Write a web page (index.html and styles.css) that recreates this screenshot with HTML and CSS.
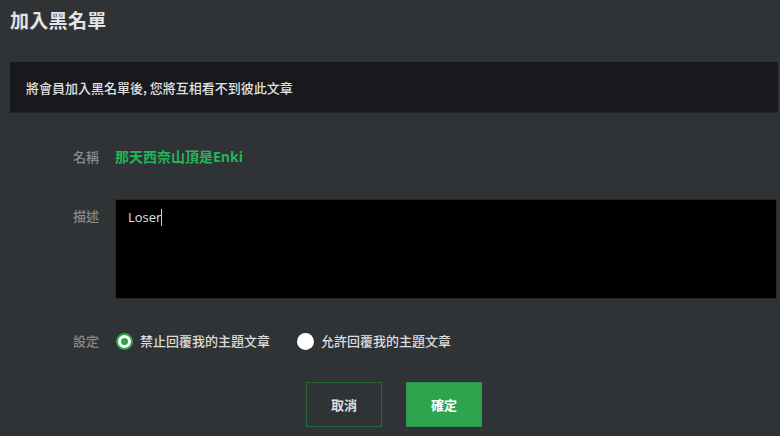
FILE: index.html
```html
<!DOCTYPE html>
<html lang="zh-Hant">
<head>
<meta charset="utf-8">
<title>加入黑名單</title>
<link rel="stylesheet" href="styles.css">
</head>
<body>
<main class="page">
  <h1 class="title">加入黑名單</h1>
  <div class="notice">將會員加入黑名單後, 您將互相看不到彼此文章</div>
  <div class="form">
    <div class="row row-name">
      <span class="label">名稱</span>
      <span class="name">那天西奈山頂是Enki</span>
    </div>
    <div class="row row-desc">
      <span class="label label-top">描述</span>
      <div class="textarea">Loser<span class="caret"></span></div>
    </div>
    <div class="row row-setting">
      <span class="label">設定</span>
      <div class="radios">
        <label class="radio"><span class="dot checked"></span>禁止回覆我的主題文章</label>
        <label class="radio"><span class="dot"></span>允許回覆我的主題文章</label>
      </div>
    </div>
  </div>
  <div class="actions">
    <button class="btn btn-cancel">取消</button>
    <button class="btn btn-ok">確定</button>
  </div>
</main>
</body>
</html>
```

FILE: styles.css
```css
* { box-sizing: border-box; }
html, body {
  margin: 0;
  padding: 0;
  background: #303336;
  width: 780px;
  height: 436px;
  overflow: hidden;
}
body {
  font-family: "Open Sans", "Noto Sans CJK TC", sans-serif;
  color: #dcdcdc;
}
.page {
  padding: 8px 2px 0 10px;
}
.title {
  margin: 0;
  font-family: "Noto Sans CJK TC", sans-serif;
  font-size: 19px;
  line-height: 24px;
  font-weight: 700;
  color: #e4e4e4;
  letter-spacing: 0.3px;
}
.notice {
  margin-top: 30px;
  height: 51px;
  background: #17191c;
  border-bottom: 1px solid #202326;
  padding: 0 16px;
  display: flex;
  align-items: center;
  font-family: "Noto Sans CJK TC", sans-serif;
  font-size: 13px;
  font-weight: 500;
  color: #e0e0e0;
}
.form {
  margin-top: 34px;
  padding-left: 63px;
  display: flex;
  flex-direction: column;
  gap: 32px;
}
.row {
  display: flex;
  align-items: flex-start;
}
.label {
  width: 42px;
  flex: none;
  font-family: "Noto Sans CJK TC", sans-serif;
  font-size: 13px;
  font-weight: 500;
  line-height: 20px;
  color: #8a8a8a;
}
.label-top {
  padding-top: 7px;
}
.name {
  font-family: "Open Sans", "Noto Sans CJK TC", sans-serif;
  font-weight: 700;
  font-size: 14px;
  line-height: 20px;
  color: #22b559;
}
.textarea {
  flex: 1;
  margin-right: 1px;
  height: 100px;
  background: #000;
  border: 1px solid #24272a;
  padding: 7px 12px;
  font-size: 13px;
  line-height: 20px;
  color: #e0e0e0;
}
.caret {
  display: inline-block;
  width: 1px;
  height: 17px;
  background: #d0d0d0;
  vertical-align: -4px;
}
.radios {
  display: flex;
  gap: 26px;
}
.radio {
  display: flex;
  align-items: center;
  gap: 7px;
  font-family: "Noto Sans CJK TC", sans-serif;
  font-size: 13px;
  font-weight: 500;
  line-height: 20px;
  color: #dcdcdc;
}
.radio .dot {
  width: 17px;
  height: 17px;
  border-radius: 50%;
  background: #fff;
  margin-left: 1px;
  display: flex;
  align-items: center;
  justify-content: center;
}
.radio .dot.checked {
  border: 2px solid #2ea44f;
}
.radio .dot.checked::after {
  content: "";
  width: 7px;
  height: 7px;
  border-radius: 50%;
  background: #2ea44f;
}
.actions {
  margin-top: 31px;
  display: flex;
  justify-content: center;
  gap: 24px;
}
.btn {
  width: 76px;
  height: 45px;
  font-family: "Noto Sans CJK TC", sans-serif;
  font-size: 13px;
  font-weight: 700;
  cursor: pointer;
  padding: 0;
}
.btn-cancel {
  background: transparent;
  border: 1px solid #27663a;
  color: #dedede;
}
.btn-ok {
  background: #2ea44f;
  border: 1px solid #28934a;
  color: #fff;
}
```
